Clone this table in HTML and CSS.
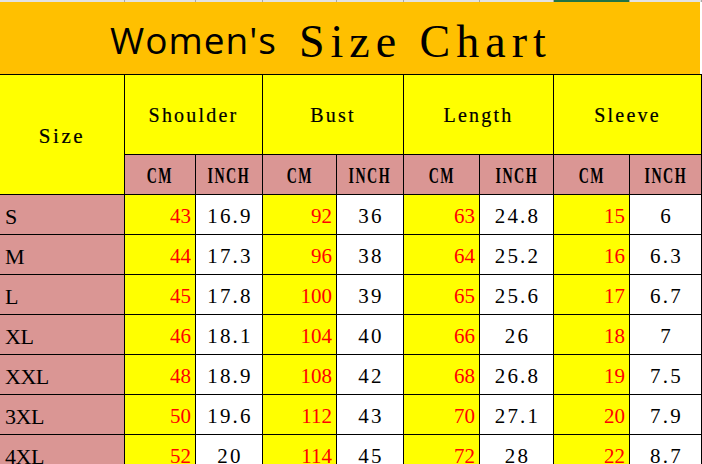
FILE: index.html
```html
<!DOCTYPE html>
<html lang="en">
<head>
<meta charset="utf-8">
<title>Women's Size Chart</title>
<link rel="stylesheet" href="styles.css">
</head>
<body>
<div class="sheet">
  <div class="strip">
    <span></span><span></span><span></span><span></span><span></span><span></span><span></span><span class="sel"></span><span></span>
  </div>
  <div class="title">
    <span class="t1">Women's</span>
    <span class="t2">Size Chart</span>
  </div>
  <div class="chart">
    <div class="hsize"><span>Size</span></div>
    <div class="grp"><span>Shoulder</span></div>
    <div class="grp"><span>Bust</span></div>
    <div class="grp"><span>Length</span></div>
    <div class="grp"><span>Sleeve</span></div>
    <div class="sub"><span>CM</span></div>
    <div class="sub"><span>INCH</span></div>
    <div class="sub"><span>CM</span></div>
    <div class="sub"><span>INCH</span></div>
    <div class="sub"><span>CM</span></div>
    <div class="sub"><span>INCH</span></div>
    <div class="sub"><span>CM</span></div>
    <div class="sub"><span>INCH</span></div>

    <div class="sz">S</div><div class="cm">43</div><div class="in">16.9</div><div class="cm">92</div><div class="in">36</div><div class="cm">63</div><div class="in">24.8</div><div class="cm">15</div><div class="in">6</div>
    <div class="sz">M</div><div class="cm">44</div><div class="in">17.3</div><div class="cm">96</div><div class="in">38</div><div class="cm">64</div><div class="in">25.2</div><div class="cm">16</div><div class="in">6.3</div>
    <div class="sz">L</div><div class="cm">45</div><div class="in">17.8</div><div class="cm">100</div><div class="in">39</div><div class="cm">65</div><div class="in">25.6</div><div class="cm">17</div><div class="in">6.7</div>
    <div class="sz">XL</div><div class="cm">46</div><div class="in">18.1</div><div class="cm">104</div><div class="in">40</div><div class="cm">66</div><div class="in">26</div><div class="cm">18</div><div class="in">7</div>
    <div class="sz">XXL</div><div class="cm">48</div><div class="in">18.9</div><div class="cm">108</div><div class="in">42</div><div class="cm">68</div><div class="in">26.8</div><div class="cm">19</div><div class="in">7.5</div>
    <div class="sz">3XL</div><div class="cm">50</div><div class="in">19.6</div><div class="cm">112</div><div class="in">43</div><div class="cm">70</div><div class="in">27.1</div><div class="cm">20</div><div class="in">7.9</div>
    <div class="sz">4XL</div><div class="cm">52</div><div class="in">20</div><div class="cm">114</div><div class="in">45</div><div class="cm">72</div><div class="in">28</div><div class="cm">22</div><div class="in">8.7</div>
  </div>
</div>
</body>
</html>
```

FILE: styles.css
```css
html, body {
  margin: 0;
  padding: 0;
  overflow: hidden;
  background: #ffffff;
}

.sheet {
  width: 702px;
}

.strip {
  display: grid;
  grid-template-columns: 124px 70px 66px 73px 66px 75px 73px 75px 71px;
  column-gap: 1px;
  height: 2px;
  background: #a8a8a8;
  padding-right: 1px;
}

.strip span {
  background: #e2e2e2;
}

.strip .sel {
  background: #217346;
}

.title {
  height: 72px;
  width: 700px;
  background: #ffc000;
  display: flex;
  align-items: center;
  padding-left: 110px;
  box-sizing: border-box;
}

.t1 {
  font-family: "Open Sans", "Noto Sans", sans-serif;
  font-size: 37px;
  letter-spacing: 1px;
  color: #000;
  padding-top: 2px;
}

.t2 {
  font-family: "Liberation Serif", serif;
  font-size: 46px;
  letter-spacing: 6px;
  color: #000;
  margin-left: 22px;
  padding-top: 6px;
}

.chart {
  display: grid;
  grid-template-columns: 124px 70px 66px 73px 66px 75px 73px 75px 71px;
  grid-template-rows: 79px 39px repeat(7, 39px);
  gap: 1px;
  padding: 1px 1px 0 0;
  background: #000;
  width: 702px;
  box-sizing: border-box;
}

.hsize,
.grp {
  background: #ffff00;
  display: flex;
  align-items: center;
  justify-content: center;
  font-family: "Liberation Serif", serif;
  font-size: 20px;
  letter-spacing: 2.2px;
  color: #000;
}

.hsize span,
.grp span {
  display: inline-block;
  -webkit-text-stroke: 0.2px #000;
}

.hsize {
  grid-row: span 2;
  padding-top: 3px;
  letter-spacing: 2.6px;
  font-size: 21px;
}

.grp {
  grid-column: span 2;
  padding-top: 2px;
}

.sub {
  background: #da9694;
  display: flex;
  align-items: center;
  justify-content: center;
  font-family: "Liberation Serif", serif;
  font-weight: bold;
  font-size: 19px;
  letter-spacing: 2px;
  color: #000;
  padding-top: 3px;
}

.sub span {
  display: inline-block;
  transform: scale(0.74, 1.2);
  white-space: nowrap;
}

.sz,
.cm,
.in {
  font-family: "Liberation Serif", serif;
  font-size: 21px;
  line-height: 35px;
  padding-top: 4px;
  white-space: nowrap;
}

.sz {
  background: #da9694;
  color: #000;
  padding-left: 5px;
  letter-spacing: -0.5px;
  font-size: 22px;
}

.cm {
  background: #ffff00;
  color: #ff0000;
  text-align: right;
  padding-right: 4px;
}

.in {
  background: #ffffff;
  color: #000;
  text-align: center;
  letter-spacing: 2.2px;
  padding-left: 2px;
}
```
